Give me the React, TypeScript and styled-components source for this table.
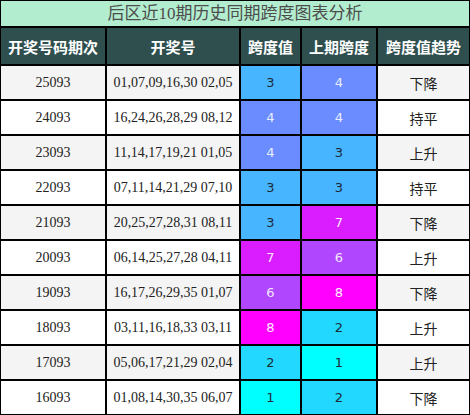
import styled, { createGlobalStyle } from "styled-components";

interface Row {
  issue: string;
  numbers: string;
  span: number;
  prev: number;
  trend: string;
}

const rows: Row[] = [
  { issue: "25093", numbers: "01,07,09,16,30 02,05", span: 3, prev: 4, trend: "下降" },
  { issue: "24093", numbers: "16,24,26,28,29 08,12", span: 4, prev: 4, trend: "持平" },
  { issue: "23093", numbers: "11,14,17,19,21 01,05", span: 4, prev: 3, trend: "上升" },
  { issue: "22093", numbers: "07,11,14,21,29 07,10", span: 3, prev: 3, trend: "持平" },
  { issue: "21093", numbers: "20,25,27,28,31 08,11", span: 3, prev: 7, trend: "下降" },
  { issue: "20093", numbers: "06,14,25,27,28 04,11", span: 7, prev: 6, trend: "上升" },
  { issue: "19093", numbers: "16,17,26,29,35 01,07", span: 6, prev: 8, trend: "下降" },
  { issue: "18093", numbers: "03,11,16,18,33 03,11", span: 8, prev: 2, trend: "上升" },
  { issue: "17093", numbers: "05,06,17,21,29 02,04", span: 2, prev: 1, trend: "上升" },
  { issue: "16093", numbers: "01,08,14,30,35 06,07", span: 1, prev: 2, trend: "下降" },
];

// background / text colour per span value
const spanColors: Record<number, { bg: string; fg: string }> = {
  1: { bg: "#00ffff", fg: "#1c2a38" },
  2: { bg: "#22d8ff", fg: "#1c2a38" },
  3: { bg: "#47b5ff", fg: "#1c2a38" },
  4: { bg: "#6a8cff", fg: "#e8eeff" },
  6: { bg: "#b146ff", fg: "#f2e6ff" },
  7: { bg: "#d91dff", fg: "#f8e6ff" },
  8: { bg: "#ff00ff", fg: "#ffeeff" },
};

const GlobalStyle = createGlobalStyle`
  html, body {
    margin: 0;
    padding: 0;
    background: #fff;
  }
`;

const Table = styled.table`
  width: 470px;
  border-collapse: separate;
  border-spacing: 0;
  table-layout: fixed;
  font-family: "Liberation Serif", "Noto Sans CJK SC", serif;
  td,
  th {
    border: 1px solid #000;
    padding: 0;
    text-align: center;
  }
`;

const TitleCell = styled.th`
  height: 25px;
  background: #b3edd0;
  color: #4d4d4d;
  font-size: 17px;
  font-weight: 400;
  line-height: 25px;
  padding-top: 1px;
`;

const HeadCell = styled.th`
  height: 36px;
  background: #2f4f4f;
  color: #fff;
  font-family: "Noto Sans CJK SC", sans-serif;
  font-size: 15px;
  font-weight: 700;
`;

const BodyRow = styled.tr<{ $alt: boolean }>`
  height: 35px;
  background: ${(p) => (p.$alt ? "#f4f4f4" : "#fff")};
`;

const TextCell = styled.td`
  color: #222;
  font-size: 14px;
`;

const TrendCell = styled.td`
  color: #222;
  font-family: "Noto Sans CJK SC", sans-serif;
  font-size: 14px;
`;

const SpanCell = styled.td<{ $value: number }>`
  background: ${(p) => spanColors[p.$value].bg};
  color: ${(p) => spanColors[p.$value].fg};
  font-family: "DejaVu Sans", sans-serif;
  font-size: 13px;
`;

export default function App() {
  return (
    <>
      <GlobalStyle />
      <Table>
        <colgroup>
          <col style={{ width: 106 }} />
          <col style={{ width: 134 }} />
          <col style={{ width: 61 }} />
          <col style={{ width: 76 }} />
          <col style={{ width: 93 }} />
        </colgroup>
        <thead>
          <tr>
            <TitleCell colSpan={5}>后区近10期历史同期跨度图表分析</TitleCell>
          </tr>
          <tr>
            <HeadCell>开奖号码期次</HeadCell>
            <HeadCell>开奖号</HeadCell>
            <HeadCell>跨度值</HeadCell>
            <HeadCell>上期跨度</HeadCell>
            <HeadCell>跨度值趋势</HeadCell>
          </tr>
        </thead>
        <tbody>
          {rows.map((r, i) => (
            <BodyRow key={r.issue} $alt={i % 2 === 0}>
              <TextCell>{r.issue}</TextCell>
              <TextCell>{r.numbers}</TextCell>
              <SpanCell $value={r.span}>{r.span}</SpanCell>
              <SpanCell $value={r.prev}>{r.prev}</SpanCell>
              <TrendCell>{r.trend}</TrendCell>
            </BodyRow>
          ))}
        </tbody>
      </Table>
    </>
  );
}
